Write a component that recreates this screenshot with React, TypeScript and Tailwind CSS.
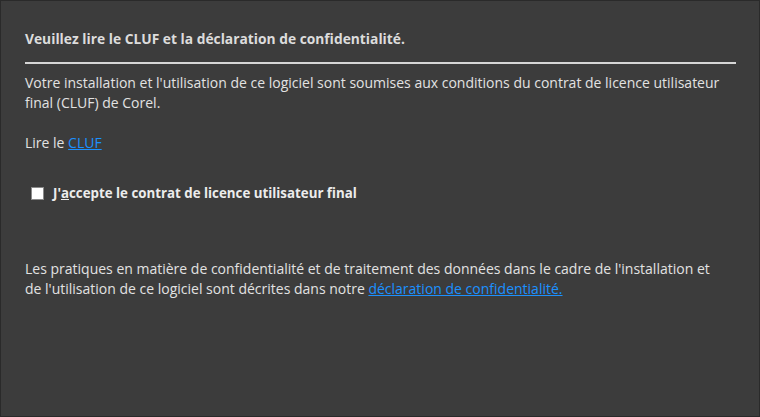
export default function App() {
  return (
    <div
      className="w-[760px] h-[417px] bg-[#3c3c3c] border border-[#2a2a2a] text-[#e2e2e2] text-[14px] leading-[20px]"
      style={{ fontFamily: '"Open Sans", "Noto Sans", sans-serif' }}
    >
      <div className="px-[24px] pt-[28px]">
        <h1 className="text-[13.8px] font-bold text-[#dcdcdc] leading-[20px]">
          Veuillez lire le CLUF et la déclaration de confidentialité.
        </h1>
        <div className="mt-[13px] h-[2px] w-[711px] bg-[#d6d6d6]" />
        <p className="mt-[9px]">
          Votre installation et l'utilisation de ce logiciel sont soumises aux conditions du contrat de licence utilisateur final (CLUF) de Corel.
        </p>
        <p className="mt-[20px]">
          Lire le{" "}
          <a href="#" className="text-[#1b91ff] underline">
            CLUF
          </a>
        </p>
        <label className="mt-[30px] ml-[6px] flex items-center gap-[9px] text-[13.3px] font-bold text-[#ececec]">
          <span className="w-[13px] h-[13px] bg-white border border-[#8a8a8a]" />
          <span>
            J'<span className="underline">a</span>ccepte le contrat de licence utilisateur final
          </span>
        </label>
        <p className="mt-[56px] w-[695px]">
          Les pratiques en matière de confidentialité et de traitement des données dans le cadre de l'installation et de l'utilisation de ce logiciel sont décrites dans notre{" "}
          <a href="#" className="text-[#1b91ff] underline">
            déclaration de confidentialité.
          </a>
        </p>
      </div>
    </div>
  )
}
